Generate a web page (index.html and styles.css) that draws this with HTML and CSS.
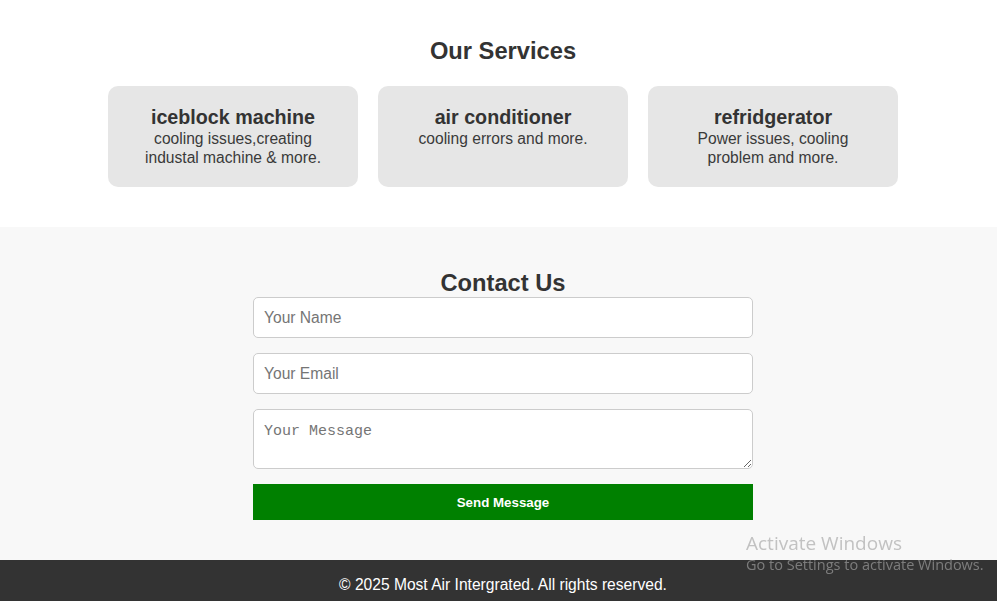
FILE: index.html
```html
<!DOCTYPE html>
<html lang="en">
<head>
<meta charset="utf-8">
<title>Most Air Intergrated</title>
<link rel="stylesheet" href="styles.css">
</head>
<body>
  <section class="services">
    <h2 class="section-title">Our Services</h2>
    <div class="cards">
      <div class="card">
        <h3 class="card-title">iceblock machine</h3>
        <p class="card-text">cooling issues,creating industal machine &amp; more.</p>
      </div>
      <div class="card">
        <h3 class="card-title">air conditioner</h3>
        <p class="card-text">cooling errors and more.</p>
      </div>
      <div class="card">
        <h3 class="card-title">refridgerator</h3>
        <p class="card-text">Power issues, cooling problem and more.</p>
      </div>
    </div>
  </section>

  <section class="contact">
    <h2 class="section-title contact-title">Contact Us</h2>
    <form class="contact-form">
      <input class="field" type="text" placeholder="Your Name">
      <input class="field" type="email" placeholder="Your Email">
      <textarea class="field field-area" placeholder="Your Message"></textarea>
      <button class="send-btn" type="button">Send Message</button>
    </form>
  </section>

  <footer class="footer">
    <p class="footer-text">© 2025 Most Air Intergrated. All rights reserved.</p>
  </footer>

  <div class="watermark">
    <div class="wm-title">Activate Windows</div>
    <div class="wm-sub">Go to Settings to activate Windows.</div>
  </div>
</body>
</html>
```

FILE: styles.css
```css
* {
  box-sizing: border-box;
}

html, body {
  margin: 0;
  padding: 0;
}

body {
  font-family: "Liberation Sans", Arial, sans-serif;
  color: #333;
  background: #fff;
}

.section-title {
  margin: 0 0 21px;
  font-size: 23.7px;
  line-height: 28px;
  font-weight: bold;
  text-align: center;
  color: #333;
}

.services {
  padding: 37px 0 40px 9px;
  background: #fff;
}

.cards {
  display: flex;
  justify-content: center;
  gap: 20px;
}

.card {
  width: 250px;
  padding: 20px;
  background: #e6e6e6;
  border-radius: 10px;
  text-align: center;
}

.card-title {
  margin: 0;
  font-size: 19.7px;
  line-height: 23px;
  font-weight: bold;
  color: #333;
}

.card-text {
  margin: 0;
  font-size: 15.6px;
  line-height: 19px;
  color: #3a3a3a;
}

.contact {
  padding: 42px 0 40px 9px;
  background: #f8f8f8;
}

.contact-title {
  margin-bottom: 0;
}

.contact-form {
  width: 500px;
  margin: 0 auto;
  display: flex;
  flex-direction: column;
  gap: 15px;
}

.field {
  width: 100%;
  height: 41px;
  padding: 10px;
  border: 1px solid #ccc;
  border-radius: 5px;
  background: #fff;
  font-family: "Liberation Sans", Arial, sans-serif;
  font-size: 15.6px;
  color: #333;
}

.field::placeholder {
  color: #757575;
}

.field-area {
  height: 60px;
  padding-top: 13px;
  font-family: "Liberation Mono", monospace;
  font-size: 15px;
  resize: vertical;
}

.send-btn {
  width: 100%;
  height: 36px;
  border: none;
  background: #008000;
  color: #fff;
  font-family: "Liberation Sans", Arial, sans-serif;
  font-size: 13.33px;
  font-weight: bold;
}

.footer {
  height: 41px;
  padding: 16px 0 0 9px;
  background: #333;
  text-align: center;
}

.footer-text {
  margin: 0;
  color: #fff;
  font-size: 15.6px;
  line-height: 18px;
}

.watermark {
  position: fixed;
  left: 746px;
  top: 531px;
  font-family: "Open Sans", "Noto Sans", sans-serif;
  color: rgba(165, 165, 165, 0.65);
  pointer-events: none;
}

.wm-title {
  font-size: 19px;
  line-height: 24px;
}

.wm-sub {
  font-size: 14.5px;
  line-height: 20px;
}
```
